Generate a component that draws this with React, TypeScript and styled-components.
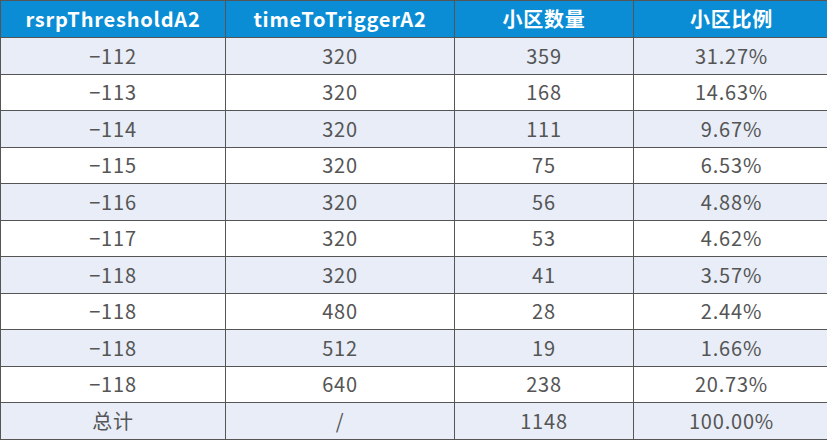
import React from "react";
import styled, { createGlobalStyle } from "styled-components";

const Global = createGlobalStyle`
  html, body { margin: 0; padding: 0; background: #ffffff; }
  body { font-family: "Noto Sans CJK SC", "Noto Sans", sans-serif; }
`;

const Table = styled.table`
  border-collapse: collapse;
  width: 825px;
  table-layout: fixed;
  font-family: "Noto Sans CJK SC", "Noto Sans", sans-serif;
  font-size: 20px;
  letter-spacing: 0.8px;
  color: #555555;
`;

const HeadCell = styled.th<{ $w: number }>`
  width: ${(p) => p.$w}px;
  height: 36px;
  padding: 0;
  background: #0a8dd5;
  color: #ffffff;
  font-weight: 700;
  border: 1px solid #555555;
  text-align: center;
  line-height: 1;
`;

const Row = styled.tr<{ $striped: boolean }>`
  background: ${(p) => (p.$striped ? "#e8edf7" : "#ffffff")};
`;

const Cell = styled.td`
  height: 35.5px;
  padding: 0;
  border: 1px solid #555555;
  text-align: center;
  line-height: 1;
`;

const headers: [string, number][] = [
  ["rsrpThresholdA2", 224],
  ["timeToTriggerA2", 228],
  ["小区数量", 178],
  ["小区比例", 195],
];

const rows: string[][] = [
  ["−112", "320", "359", "31.27%"],
  ["−113", "320", "168", "14.63%"],
  ["−114", "320", "111", "9.67%"],
  ["−115", "320", "75", "6.53%"],
  ["−116", "320", "56", "4.88%"],
  ["−117", "320", "53", "4.62%"],
  ["−118", "320", "41", "3.57%"],
  ["−118", "480", "28", "2.44%"],
  ["−118", "512", "19", "1.66%"],
  ["−118", "640", "238", "20.73%"],
  ["总计", "/", "1148", "100.00%"],
];

export default function App() {
  return (
    <>
      <Global />
      <Table>
        <thead>
          <tr>
            {headers.map(([h, w]) => (
              <HeadCell key={h} $w={w}>
                {h}
              </HeadCell>
            ))}
          </tr>
        </thead>
        <tbody>
          {rows.map((r, i) => (
            <Row key={i} $striped={i % 2 === 0}>
              {r.map((c, j) => (
                <Cell key={j}>{c}</Cell>
              ))}
            </Row>
          ))}
        </tbody>
      </Table>
    </>
  );
}
